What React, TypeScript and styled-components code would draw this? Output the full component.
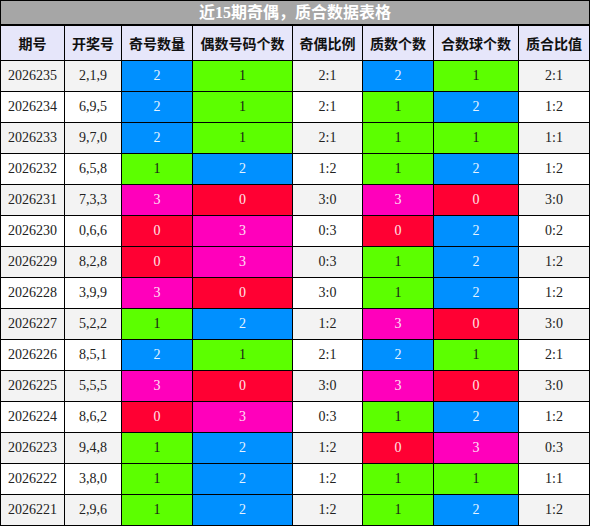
import React from 'react';
import styled, { createGlobalStyle } from 'styled-components';

const GlobalStyle = createGlobalStyle`
  html, body {
    margin: 0;
    padding: 0;
    background: #fff;
  }
`;

const Table = styled.table`
  width: 590px;
  border-collapse: collapse;
  table-layout: fixed;
  font-family: "Liberation Serif", "Noto Sans CJK SC", serif;
  font-size: 14px;
  color: #222;
`;

const TitleCell = styled.th`
  height: 23px;
  padding: 0;
  background: #a6a6a6;
  color: #fff;
  font-size: 16px;
  font-weight: 700;
  text-align: center;
  border: 1px solid #000;
  border-bottom-width: 2px;
  line-height: 23px;
`;

const HeadCell = styled.th`
  height: 34px;
  padding: 0;
  background: #e6e6fa;
  font-family: "Noto Sans CJK SC", sans-serif;
  font-size: 14px;
  font-weight: 700;
  color: #111;
  border: 1px solid #000;
  text-align: center;
`;

const Row = styled.tr<{ $striped: boolean }>`
  background: ${p => (p.$striped ? '#f3f3f3' : '#fff')};
`;

const Cell = styled.td`
  height: 30px;
  padding: 0;
  border: 1px solid #000;
  text-align: center;
`;

const countColors: Record<number, { bg: string; fg: string }> = {
  0: { bg: '#ff0033', fg: '#ffe6ea' },
  1: { bg: '#5cff00', fg: '#1a1a1a' },
  2: { bg: '#0090ff', fg: '#e6f3ff' },
  3: { bg: '#ff00bb', fg: '#ffe0f5' },
};

const CountCell = styled.td<{ $n: number }>`
  height: 30px;
  padding: 0;
  border: 1px solid #000;
  text-align: center;
  background: ${p => countColors[p.$n].bg};
  color: ${p => countColors[p.$n].fg};
`;

const widths = [64, 57, 71, 100, 70, 71, 85, 71];
const headers = ['期号', '开奖号', '奇号数量', '偶数号码个数', '奇偶比例', '质数个数', '合数球个数', '质合比值'];

const rows: [string, string, number, number, number, number][] = [
  ['2026235', '2,1,9', 2, 1, 2, 1],
  ['2026234', '6,9,5', 2, 1, 1, 2],
  ['2026233', '9,7,0', 2, 1, 1, 1],
  ['2026232', '6,5,8', 1, 2, 1, 2],
  ['2026231', '7,3,3', 3, 0, 3, 0],
  ['2026230', '0,6,6', 0, 3, 0, 2],
  ['2026229', '8,2,8', 0, 3, 1, 2],
  ['2026228', '3,9,9', 3, 0, 1, 2],
  ['2026227', '5,2,2', 1, 2, 3, 0],
  ['2026226', '8,5,1', 2, 1, 2, 1],
  ['2026225', '5,5,5', 3, 0, 3, 0],
  ['2026224', '8,6,2', 0, 3, 1, 2],
  ['2026223', '9,4,8', 1, 2, 0, 3],
  ['2026222', '3,8,0', 1, 2, 1, 1],
  ['2026221', '2,9,6', 1, 2, 1, 2],
];

const App: React.FC = () => {
  return (
    <>
      <GlobalStyle />
      <Table>
        <colgroup>
          {widths.map((w, i) => (
            <col key={i} style={{ width: w }} />
          ))}
        </colgroup>
        <thead>
          <tr>
            <TitleCell colSpan={8}>近15期奇偶，质合数据表格</TitleCell>
          </tr>
          <tr>
            {headers.map(h => (
              <HeadCell key={h}>{h}</HeadCell>
            ))}
          </tr>
        </thead>
        <tbody>
          {rows.map(([issue, nums, odd, even, prime, comp], i) => (
            <Row key={issue} $striped={i % 2 === 0}>
              <Cell>{issue}</Cell>
              <Cell>{nums}</Cell>
              <CountCell $n={odd}>{odd}</CountCell>
              <CountCell $n={even}>{even}</CountCell>
              <Cell>{`${odd}:${even}`}</Cell>
              <CountCell $n={prime}>{prime}</CountCell>
              <CountCell $n={comp}>{comp}</CountCell>
              <Cell>{`${prime}:${comp}`}</Cell>
            </Row>
          ))}
        </tbody>
      </Table>
    </>
  );
};

export default App;
